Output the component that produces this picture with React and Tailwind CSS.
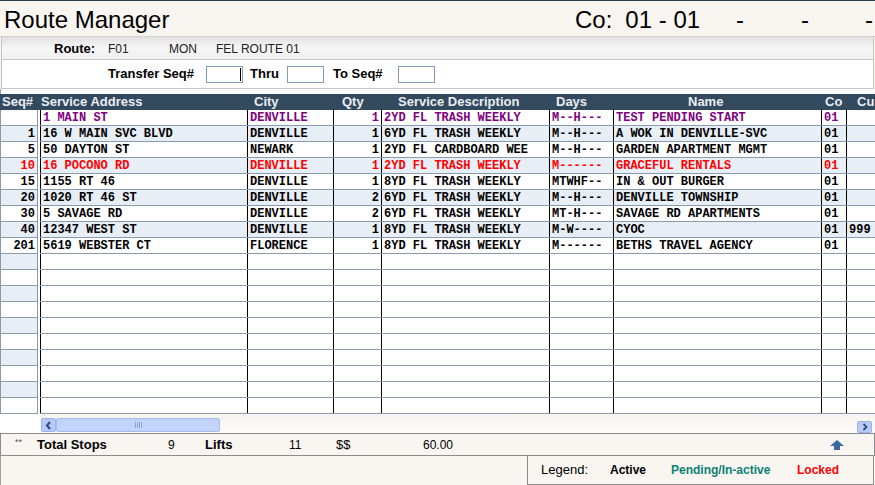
import React from 'react'

const PURPLE = 'text-[#800080]'
const RED = 'text-[#ff0000]'
const BLACK = 'text-black'

const stops = [
  { seq: '', addr: '1 MAIN ST', city: 'DENVILLE', qty: '1', desc: '2YD FL TRASH WEEKLY', days: 'M--H---', name: 'TEST PENDING START', co: '01', cu: '', color: PURPLE },
  { seq: '1', addr: '16 W MAIN SVC BLVD', city: 'DENVILLE', qty: '1', desc: '6YD FL TRASH WEEKLY', days: 'M--H---', name: 'A WOK IN DENVILLE-SVC', co: '01', cu: '', color: BLACK },
  { seq: '5', addr: '50 DAYTON ST', city: 'NEWARK', qty: '1', desc: '2YD FL CARDBOARD WEE', days: 'M--H---', name: 'GARDEN APARTMENT MGMT', co: '01', cu: '', color: BLACK },
  { seq: '10', addr: '16 POCONO RD', city: 'DENVILLE', qty: '1', desc: '2YD FL TRASH WEEKLY', days: 'M------', name: 'GRACEFUL RENTALS', co: '01', cu: '', color: RED },
  { seq: '15', addr: '1155 RT 46', city: 'DENVILLE', qty: '1', desc: '8YD FL TRASH WEEKLY', days: 'MTWHF--', name: 'IN & OUT BURGER', co: '01', cu: '', color: BLACK },
  { seq: '20', addr: '1020 RT 46 ST', city: 'DENVILLE', qty: '2', desc: '6YD FL TRASH WEEKLY', days: 'M--H---', name: 'DENVILLE TOWNSHIP', co: '01', cu: '', color: BLACK },
  { seq: '30', addr: '5 SAVAGE RD', city: 'DENVILLE', qty: '2', desc: '6YD FL TRASH WEEKLY', days: 'MT-H---', name: 'SAVAGE RD APARTMENTS', co: '01', cu: '', color: BLACK },
  { seq: '40', addr: '12347 WEST ST', city: 'DENVILLE', qty: '1', desc: '8YD FL TRASH WEEKLY', days: 'M-W----', name: 'CYOC', co: '01', cu: '999', color: BLACK },
  { seq: '201', addr: '5619 WEBSTER CT', city: 'FLORENCE', qty: '1', desc: '8YD FL TRASH WEEKLY', days: 'M------', name: 'BETHS TRAVEL AGENCY', co: '01', cu: '', color: BLACK },
]

const TOTAL_ROWS = 19

// main grid columns: address, city, qty, description, days, name, co, cu
const cols = 'grid grid-cols-[207px_86px_48px_168px_64px_208px_25px_60px]'
const cell = 'border-l border-black h-[15px] leading-[16px] px-[2px] whitespace-nowrap overflow-hidden'

function SeqColumn() {
  return (
    <div className="w-[38px] shrink-0 flex flex-col">
      {Array.from({ length: TOTAL_ROWS }).map((_, i) => {
        const s = stops[i]
        return (
          <div
            key={i}
            className={`h-[16px] border-l border-r border-b border-[#8a9bb0] text-right pr-[2px] leading-[16px] ${
              i % 2 === 1 ? 'bg-[#e8eef6]' : 'bg-white'
            } ${s ? s.color : ''}`}
          >
            {s ? s.seq : ''}
          </div>
        )
      })}
    </div>
  )
}

function MainGrid() {
  return (
    <div className="flex-1 overflow-hidden">
      {Array.from({ length: TOTAL_ROWS }).map((_, i) => {
        const s = stops[i]
        const bg = s && i % 2 === 1 ? 'bg-[#e8eef6]' : 'bg-white'
        return (
          <div key={i} className={`${cols} h-[16px] border-b border-[#8a9bb0] ${bg} ${s ? s.color : ''}`}>
            <div className={cell}>{s?.addr}</div>
            <div className={cell}>{s?.city}</div>
            <div className={`${cell} text-right`}>{s?.qty}</div>
            <div className={cell}>{s?.desc}</div>
            <div className={cell}>{s?.days}</div>
            <div className={cell}>{s?.name}</div>
            <div className={cell}>{s?.co}</div>
            <div className={cell}>{s?.cu}</div>
          </div>
        )
      })}
    </div>
  )
}

function Input({ caret }) {
  return (
    <div className="relative w-[37px] h-[17px] bg-white border border-[#7f9db9]">
      {caret && <span className="absolute right-[1px] top-[1px] w-px h-[13px] bg-black" />}
    </div>
  )
}

function UpArrow() {
  return (
    <svg width="14" height="10" viewBox="0 0 14 10">
      <polygon points="7,0 14,6 10,6 10,10 4,10 4,6 0,6" fill="#3b68a3" />
    </svg>
  )
}

export default function App() {
  return (
    <div className="w-[875px] h-[485px] overflow-hidden bg-[#f9f5f0] border-t border-[#2d3d4e] font-['Liberation_Sans',Arial,sans-serif] text-black flex flex-col">
      {/* title */}
      <div className="h-[36px] shrink-0 flex items-center pl-[4px] pt-[2px] text-[24px] leading-none border-b border-[#d4d0cb]">
        <span className="w-[571px]">Route Manager</span>
        <span>Co:</span>
        <span className="ml-[13px]">01 - 01</span>
        <span className="ml-[36px]">-</span>
        <span className="ml-[57px]">-</span>
        <span className="ml-[56px]">-</span>
      </div>

      {/* route panel */}
      <div className="mx-[1px] shrink-0 border-l border-r border-b border-[#c4c4c4]">
        <div className="h-[23px] flex items-center pl-[52px] pt-[2px] text-[12px] bg-gradient-to-b from-[#e1e1e1] via-[#f6f6f6] to-[#f0f0f0] border-b border-[#c8c8c8] text-[#222]">
          <span className="w-[54px] font-bold text-[13px] text-black">Route:</span>
          <span className="w-[61px]">F01</span>
          <span className="w-[47px]">MON</span>
          <span>FEL ROUTE 01</span>
        </div>
        <div className="h-[28px] bg-white flex items-center pl-[106px] text-[13px] font-bold">
          <span className="w-[98px]">Transfer Seq#</span>
          <Input caret />
          <span className="ml-[7px] w-[37px]">Thru</span>
          <Input />
          <span className="ml-[9px] w-[65px]">To Seq#</span>
          <Input />
        </div>
      </div>
      <div className="h-[5px] shrink-0 bg-[#fcfcfc] border-l border-[#a0a0a0]" />

      {/* header */}
      <div className="h-[16px] shrink-0 bg-[#33495d] text-[#e8eef4] text-[13px] font-bold leading-[16px] flex whitespace-nowrap overflow-hidden">
        <div className="w-[40px] shrink-0 pl-[2px]">Seq#</div>
        <div className={`${cols} shrink-0`}>
          <div className="pl-[1px]">Service Address</div>
          <div className="pl-[7px]">City</div>
          <div className="pl-[9px]">Qty</div>
          <div className="pl-[17px]">Service Description</div>
          <div className="pl-[7px]">Days</div>
          <div className="pl-[75px]">Name</div>
          <div className="pl-[4px]">Co</div>
          <div className="pl-[11px]">Cu</div>
        </div>
      </div>

      {/* grid */}
      <div className="flex shrink-0 font-['Liberation_Mono',monospace] font-bold text-[12px] bg-white">
        <SeqColumn />
        <div className="w-[2px] shrink-0" />
        <MainGrid />
      </div>

      {/* scrollbar */}
      <div className="h-[19px] shrink-0 flex">
        <div className="w-[40px] bg-white" />
        <div className="flex-1 flex pt-[4px] bg-gradient-to-b from-[#f6f3ef] to-[#fdfcfb]">
          <div className="w-[15px] h-[14px] bg-[#b6caf5] border border-[#9bb3e8] rounded-[2px] flex items-center justify-center ml-px">
            <svg width="7" height="9" viewBox="0 0 7 9">
              <path d="M5 1 L2 4.5 L5 8" stroke="#2c4a8a" strokeWidth="2" fill="none" />
            </svg>
          </div>
          <div className="w-[164px] h-[14px] bg-[#c2d4fa] border border-[#a4bbee] rounded-[2px] flex items-center justify-center gap-px">
            <span className="w-px h-[6px] bg-[#8aa5e0]" />
            <span className="w-px h-[6px] bg-[#8aa5e0]" />
            <span className="w-px h-[6px] bg-[#8aa5e0]" />
            <span className="w-px h-[6px] bg-[#8aa5e0]" />
          </div>
          <div className="flex-1" />
          <div className="w-[15px] h-[12px] mt-[3px] mr-[3px] bg-[#b6caf5] border border-[#9bb3e8] rounded-[2px] flex items-center justify-center">
            <svg width="6" height="8" viewBox="0 0 6 8">
              <path d="M1.5 1 L4.5 4 L1.5 7" stroke="#2c4a8a" strokeWidth="1.8" fill="none" />
            </svg>
          </div>
        </div>
      </div>

      {/* totals */}
      <div className="h-[23px] shrink-0 flex items-center text-[12px] border-t border-b border-[#8c8c8c] border-l border-r">
        <span className="w-[36px] pl-[14px] text-[9px] text-[#555] -mt-[3px]">**</span>
        <span className="w-[131px] font-bold text-[13px]">Total Stops</span>
        <span className="w-[37px]">9</span>
        <span className="w-[84px] font-bold text-[13px]">Lifts</span>
        <span className="w-[47px]">11</span>
        <span className="w-[87px] text-[13px]">$$</span>
        <span className="w-[407px]">60.00</span>
        <UpArrow />
      </div>

      {/* legend */}
      <div className="flex-1 flex border-l border-[#a0a0a0]">
        <div className="w-[526px]" />
        <div className="w-[347px] border-l border-r border-b border-[#8c8c8c] flex items-center text-[12px]">
          <span className="ml-[13px] w-[69px] text-[13px]">Legend:</span>
          <span className="w-[61px] font-bold">Active</span>
          <span className="w-[126px] font-bold text-[#0a8276]">Pending/In-active</span>
          <span className="font-bold text-[#ff0000]">Locked</span>
        </div>
      </div>
    </div>
  )
}
